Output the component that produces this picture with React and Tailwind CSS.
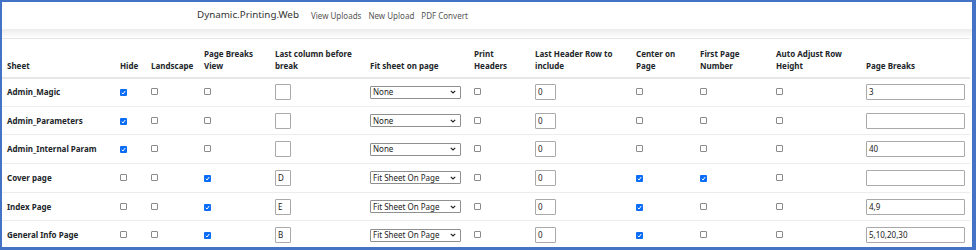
import React from "react";

const rows = [
  { name: "Admin_Magic", hide: true, land: false, pbv: false, col: "", fit: "None", ph: false, hdr: "0", center: false, first: false, auto: false, breaks: "3" },
  { name: "Admin_Parameters", hide: true, land: false, pbv: false, col: "", fit: "None", ph: false, hdr: "0", center: false, first: false, auto: false, breaks: "" },
  { name: "Admin_Internal Param", hide: true, land: false, pbv: false, col: "", fit: "None", ph: false, hdr: "0", center: false, first: false, auto: false, breaks: "40" },
  { name: "Cover page", hide: false, land: false, pbv: true, col: "D", fit: "Fit Sheet On Page", ph: false, hdr: "0", center: true, first: true, auto: false, breaks: "" },
  { name: "Index Page", hide: false, land: false, pbv: true, col: "E", fit: "Fit Sheet On Page", ph: false, hdr: "0", center: true, first: false, auto: false, breaks: "4,9" },
  { name: "General Info Page", hide: false, land: false, pbv: true, col: "B", fit: "Fit Sheet On Page", ph: false, hdr: "0", center: true, first: false, auto: false, breaks: "5,10,20,30" },
];

const Check = ({ on }) =>
  on ? (
    <span className="inline-flex w-[7px] h-[7px] rounded-[1px] bg-[#0b6cf5] items-center justify-center">
      <svg width="5" height="5" viewBox="0 0 10 10">
        <path d="M1.5 5.5 L4 8 L8.5 2" stroke="white" strokeWidth="2" fill="none" />
      </svg>
    </span>
  ) : (
    <span className="inline-block w-[7px] h-[7px] rounded-[1px] border border-[#8a8a8a] bg-white" />
  );

const Box = ({ value, w }) => (
  <div className={`${w} h-[16px] border border-[#a9a9a9] rounded-[1px] bg-white text-[8px] leading-[14px] pl-[2px] text-[#222]`}>
    {value}
  </div>
);

const Select = ({ value }) => (
  <div className="w-[91px] h-[13px] border border-[#8f8f8f] rounded-[1px] bg-white flex items-center justify-between pl-[2px] pr-[4px] text-[8px] text-[#222]">
    <span>{value}</span>
    <svg width="6" height="4" viewBox="0 0 6 4">
      <path d="M0.8 0.8 L3 3 L5.2 0.8" stroke="#222" strokeWidth="1.2" fill="none" />
    </svg>
  </div>
);

export default function App() {
  const th = "px-[5px] pb-[5px] align-bottom text-left font-bold";
  const td = "px-[5px] align-middle";
  return (
    <div
      className="w-[976px] h-[250px] overflow-hidden bg-white border-t-2 border-l-2 border-r-[4px] border-b-[3px] border-[#4472c4] text-[#212529]"
      style={{ fontFamily: '"Segoe UI", "Noto Sans", sans-serif' }}
    >
      <div className="h-[27px] flex items-center pl-[195px] gap-[12px] bg-white">
        <span className="text-[9.8px] text-[#333]">Dynamic.Printing.Web</span>
        <div className="flex gap-[7px] text-[8px] text-[#555]">
          <span>View Uploads</span>
          <span>New Upload</span>
          <span>PDF Convert</span>
        </div>
      </div>
      <div className="h-[9px] bg-gradient-to-b from-[#ececec] to-white" />
      <table className="table-fixed border-collapse w-[968px] text-[8px] border-t border-[#e8e8e8]">
        <colgroup>
          <col className="w-[113px]" />
          <col className="w-[31px]" />
          <col className="w-[53px]" />
          <col className="w-[71px]" />
          <col className="w-[95px]" />
          <col className="w-[104px]" />
          <col className="w-[61px]" />
          <col className="w-[101px]" />
          <col className="w-[64px]" />
          <col className="w-[76px]" />
          <col className="w-[90px]" />
          <col className="w-[109px]" />
        </colgroup>
        <thead>
          <tr className="h-[39px] border-b-2 border-[#e6e6e6] leading-[12px]">
            <th className={th}>Sheet</th>
            <th className={th}>Hide</th>
            <th className={th}>Landscape</th>
            <th className={th}>Page Breaks View</th>
            <th className={th}>Last column before break</th>
            <th className={th}>Fit sheet on page</th>
            <th className={th}>Print Headers</th>
            <th className={th}>Last Header Row to include</th>
            <th className={th}>Center on Page</th>
            <th className={th}>First Page Number</th>
            <th className={th}>Auto Adjust Row Height</th>
            <th className={th}>Page Breaks</th>
          </tr>
        </thead>
        <tbody>
          {rows.map((r) => (
            <tr key={r.name} className="h-[28.7px] border-b border-[#ececec]">
              <td className={`${td} font-bold`}>{r.name}</td>
              <td className={td}><Check on={r.hide} /></td>
              <td className={td}><Check on={r.land} /></td>
              <td className={td}><Check on={r.pbv} /></td>
              <td className={td}><Box value={r.col} w="w-[16px]" /></td>
              <td className={td}><Select value={r.fit} /></td>
              <td className={td}><Check on={r.ph} /></td>
              <td className={td}><Box value={r.hdr} w="w-[21px]" /></td>
              <td className={td}><Check on={r.center} /></td>
              <td className={td}><Check on={r.first} /></td>
              <td className={td}><Check on={r.auto} /></td>
              <td className={td}><Box value={r.breaks} w="w-[99px]" /></td>
            </tr>
          ))}
        </tbody>
      </table>
    </div>
  );
}
